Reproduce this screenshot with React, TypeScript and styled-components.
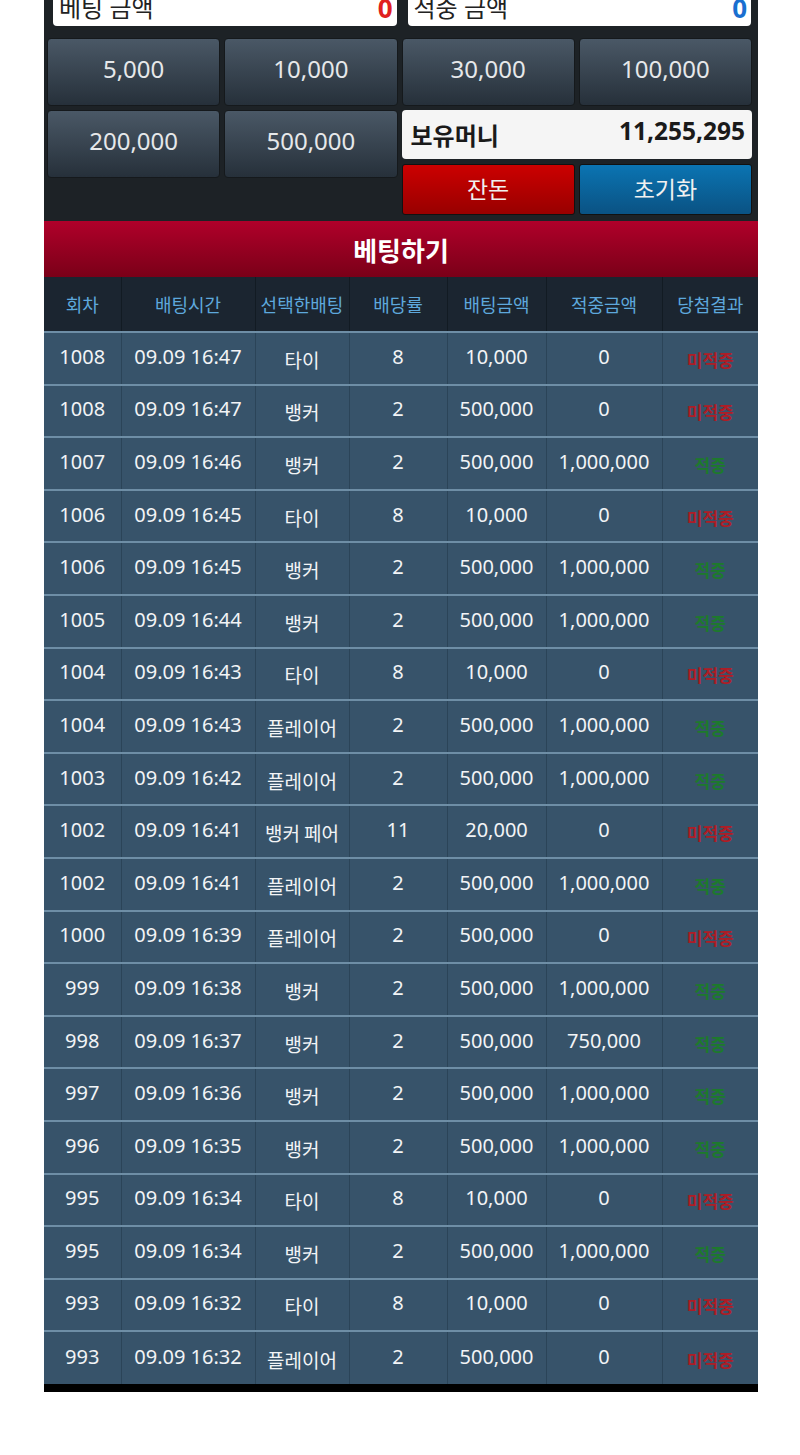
import React from "react";
import styled, { createGlobalStyle } from "styled-components";

const GlobalStyle = createGlobalStyle`
  html, body {
    margin: 0;
    padding: 0;
    background: #ffffff;
  }
  body {
    font-family: "Noto Sans", "Noto Sans CJK KR", sans-serif;
  }
`;

type Row = {
  round: string;
  time: string;
  pick: string;
  odds: string;
  bet: string;
  win: string;
  hit: boolean;
};

const rows: Row[] = [
  { round: "1008", time: "09.09 16:47", pick: "타이", odds: "8", bet: "10,000", win: "0", hit: false },
  { round: "1008", time: "09.09 16:47", pick: "뱅커", odds: "2", bet: "500,000", win: "0", hit: false },
  { round: "1007", time: "09.09 16:46", pick: "뱅커", odds: "2", bet: "500,000", win: "1,000,000", hit: true },
  { round: "1006", time: "09.09 16:45", pick: "타이", odds: "8", bet: "10,000", win: "0", hit: false },
  { round: "1006", time: "09.09 16:45", pick: "뱅커", odds: "2", bet: "500,000", win: "1,000,000", hit: true },
  { round: "1005", time: "09.09 16:44", pick: "뱅커", odds: "2", bet: "500,000", win: "1,000,000", hit: true },
  { round: "1004", time: "09.09 16:43", pick: "타이", odds: "8", bet: "10,000", win: "0", hit: false },
  { round: "1004", time: "09.09 16:43", pick: "플레이어", odds: "2", bet: "500,000", win: "1,000,000", hit: true },
  { round: "1003", time: "09.09 16:42", pick: "플레이어", odds: "2", bet: "500,000", win: "1,000,000", hit: true },
  { round: "1002", time: "09.09 16:41", pick: "뱅커 페어", odds: "11", bet: "20,000", win: "0", hit: false },
  { round: "1002", time: "09.09 16:41", pick: "플레이어", odds: "2", bet: "500,000", win: "1,000,000", hit: true },
  { round: "1000", time: "09.09 16:39", pick: "플레이어", odds: "2", bet: "500,000", win: "0", hit: false },
  { round: "999", time: "09.09 16:38", pick: "뱅커", odds: "2", bet: "500,000", win: "1,000,000", hit: true },
  { round: "998", time: "09.09 16:37", pick: "뱅커", odds: "2", bet: "500,000", win: "750,000", hit: true },
  { round: "997", time: "09.09 16:36", pick: "뱅커", odds: "2", bet: "500,000", win: "1,000,000", hit: true },
  { round: "996", time: "09.09 16:35", pick: "뱅커", odds: "2", bet: "500,000", win: "1,000,000", hit: true },
  { round: "995", time: "09.09 16:34", pick: "타이", odds: "8", bet: "10,000", win: "0", hit: false },
  { round: "995", time: "09.09 16:34", pick: "뱅커", odds: "2", bet: "500,000", win: "1,000,000", hit: true },
  { round: "993", time: "09.09 16:32", pick: "타이", odds: "8", bet: "10,000", win: "0", hit: false },
  { round: "993", time: "09.09 16:32", pick: "플레이어", odds: "2", bet: "500,000", win: "0", hit: false },
];

const columns = [
  { label: "회차", width: 77 },
  { label: "배팅시간", width: 134 },
  { label: "선택한배팅", width: 94 },
  { label: "배당률", width: 98 },
  { label: "배팅금액", width: 99 },
  { label: "적중금액", width: 116 },
  { label: "당첨결과", width: 96 },
];

const chips = ["5,000", "10,000", "30,000", "100,000", "200,000", "500,000"];

const Page = styled.div`
  width: 714px;
  margin: 0 0 0 44px;
  background: #1d2226;
  overflow: hidden;
`;

const Controls = styled.div`
  display: flex;
  flex-direction: column;
  gap: 12px;
  padding: 0 6px 6px 3px;
  margin-top: -11px;
`;

const AmountRow = styled.div`
  display: grid;
  grid-template-columns: 1fr 1fr;
  gap: 11px;
  padding: 0 1px 0 6px;
`;

const AmountBox = styled.div`
  height: 37px;
  background: #ffffff;
  border-radius: 0 0 4px 4px;
  display: flex;
  align-items: center;
  justify-content: space-between;
  padding: 0 4px 0 6px;
  box-sizing: border-box;
`;

const AmountLabel = styled.span`
  font-size: 24px;
  color: #222;
  line-height: 1;
`;

const AmountValue = styled.span<{ $tone: "red" | "blue" }>`
  font-size: 26px;
  font-weight: 700;
  line-height: 1;
  color: ${(p) => (p.$tone === "red" ? "#e02020" : "#1a6fd0")};
`;

const ChipGrid = styled.div`
  display: grid;
  grid-template-columns: repeat(4, 1fr);
  grid-auto-rows: auto;
  gap: 4px;
`;

const Chip = styled.button`
  height: 68px;
  border: 1px solid #15191c;
  border-radius: 4px;
  background: linear-gradient(#4a5866, #26303a);
  color: #e6e8ea;
  font-family: "Noto Sans", "Noto Sans CJK KR", sans-serif;
  font-size: 24px;
  padding: 0 0 7px;
  cursor: pointer;
`;

const SidePanel = styled.div`
  grid-column: 3 / span 2;
  display: flex;
  flex-direction: column;
  gap: 5px;
`;

const MoneyBox = styled.div`
  height: 49px;
  background: #f5f5f5;
  border-radius: 4px;
  display: flex;
  align-items: center;
  justify-content: space-between;
  padding: 0 7px 0 9px;
  box-sizing: border-box;
`;

const MoneyLabel = styled.span`
  font-size: 24px;
  font-weight: 700;
  color: #1a1a1a;
`;

const MoneyValue = styled.span`
  font-size: 24.5px;
  font-weight: 700;
  color: #1a1a1a;
  margin-top: -8px;
`;

const ActionRow = styled.div`
  display: grid;
  grid-template-columns: 1fr 1fr;
  gap: 4px;
`;

const ActionButton = styled.button<{ $variant: "red" | "blue" }>`
  height: 51px;
  border: 1px solid #111;
  border-radius: 3px;
  background: ${(p) =>
    p.$variant === "red"
      ? "linear-gradient(#cc0000, #980000)"
      : "linear-gradient(#0b74b2, #0a5283)"};
  color: #f0f0f0;
  font-family: "Noto Sans CJK KR", "Noto Sans", sans-serif;
  font-size: 23px;
  padding: 0 0 3px;
  cursor: pointer;
`;

const SectionTitle = styled.div`
  height: 56px;
  background: linear-gradient(#b0002a, #7a0018);
  color: #ffffff;
  font-family: "Noto Sans CJK KR", "Noto Sans", sans-serif;
  font-size: 26px;
  font-weight: 700;
  display: flex;
  align-items: center;
  justify-content: center;
`;

const Table = styled.table`
  width: 714px;
  border-collapse: collapse;
  table-layout: fixed;
`;

const HeadCell = styled.th`
  height: 54px;
  padding: 0;
  background: #1b2530;
  color: #5ea8dc;
  font-family: "Noto Sans CJK KR", "Noto Sans", sans-serif;
  font-size: 18px;
  font-weight: 400;
  text-align: center;
  white-space: nowrap;
  border-left: 1px solid #121b23;
  &:first-child {
    border-left: none;
  }
`;

const BodyRow = styled.tr`
  height: 52.6px;
  background: #37536a;
  border-top: 2px solid #6e8ea6;
`;

const Cell = styled.td<{ $kr?: boolean }>`
  padding: 0;
  text-align: center;
  color: #f2f4f6;
  font-size: 20px;
  font-family: ${(p) =>
    p.$kr
      ? `"Noto Sans CJK KR", "Noto Sans", sans-serif`
      : `"Noto Sans", "Noto Sans CJK KR", sans-serif`};
  border-left: 1px solid #2b4458;
  white-space: nowrap;
  &:first-child {
    border-left: none;
  }
`;

const Num = styled.span`
  position: relative;
  top: -2px;
`;

const KrText = styled.span`
  position: relative;
  top: 1px;
  font-size: 19px;
`;

const Result = styled.span<{ $hit: boolean }>`
  position: relative;
  top: 1px;
  font-family: "Noto Sans CJK KR", sans-serif;
  font-size: 17px;
  font-weight: 700;
  color: ${(p) => (p.$hit ? "#1d7a2c" : "#ad1d26")};
`;

const BottomBar = styled.div`
  height: 8px;
  background: #000000;
`;

export default function App() {
  return (
    <>
      <GlobalStyle />
      <Page>
        <Controls>
          <AmountRow>
            <AmountBox>
              <AmountLabel>베팅 금액</AmountLabel>
              <AmountValue $tone="red">0</AmountValue>
            </AmountBox>
            <AmountBox>
              <AmountLabel>적중 금액</AmountLabel>
              <AmountValue $tone="blue">0</AmountValue>
            </AmountBox>
          </AmountRow>
          <ChipGrid>
            {chips.map((c) => (
              <Chip key={c}>{c}</Chip>
            ))}
            <SidePanel>
              <MoneyBox>
                <MoneyLabel>보유머니</MoneyLabel>
                <MoneyValue>11,255,295</MoneyValue>
              </MoneyBox>
              <ActionRow>
                <ActionButton $variant="red">잔돈</ActionButton>
                <ActionButton $variant="blue">초기화</ActionButton>
              </ActionRow>
            </SidePanel>
          </ChipGrid>
        </Controls>
        <SectionTitle>베팅하기</SectionTitle>
        <Table>
          <colgroup>
            {columns.map((c) => (
              <col key={c.label} style={{ width: c.width }} />
            ))}
          </colgroup>
          <thead>
            <tr>
              {columns.map((c) => (
                <HeadCell key={c.label}>{c.label}</HeadCell>
              ))}
            </tr>
          </thead>
          <tbody>
            {rows.map((r, i) => (
              <BodyRow key={i}>
                <Cell><Num>{r.round}</Num></Cell>
                <Cell><Num>{r.time}</Num></Cell>
                <Cell $kr><KrText>{r.pick}</KrText></Cell>
                <Cell><Num>{r.odds}</Num></Cell>
                <Cell><Num>{r.bet}</Num></Cell>
                <Cell><Num>{r.win}</Num></Cell>
                <Cell>
                  <Result $hit={r.hit}>{r.hit ? "적중" : "미적중"}</Result>
                </Cell>
              </BodyRow>
            ))}
          </tbody>
        </Table>
        <BottomBar />
      </Page>
    </>
  );
}
